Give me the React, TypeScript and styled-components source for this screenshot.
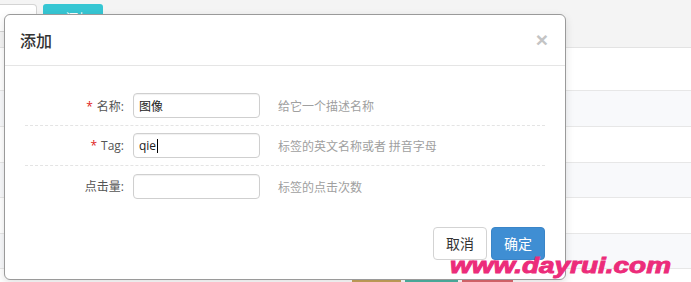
import React from "react";
import styled, { createGlobalStyle } from "styled-components";

const GlobalStyle = createGlobalStyle`
  html, body { margin: 0; padding: 0; background: #fff; }
  body { overflow: hidden; font-family: "Open Sans", "Noto Sans CJK SC", sans-serif; }
  * { box-sizing: border-box; }
`;

const Page = styled.div`
  position: relative;
  width: 691px;
  height: 282px;
  overflow: hidden;
  background: #fff;
`;

const TopBar = styled.div`
  height: 48px;
  background: #f4f4f4;
  border-bottom: 1px solid #e3e3e3;
  display: flex;
  align-items: flex-start;
  gap: 6px;
  padding-top: 4px;
`;

const SearchBox = styled.div`
  width: 37px;
  height: 28px;
  background: #fff;
  border: 1px solid #d4d4d4;
  border-left: none;
  border-radius: 0 4px 4px 0;
`;

const TealButton = styled.div`
  width: 60px;
  height: 28px;
  background: #36c6d3;
  border-radius: 3px;
  color: #fff;
  font-size: 13px;
  line-height: 28px;
  text-align: center;
`;

const Row = styled.div<{ $h: number; $striped?: boolean }>`
  height: ${(p) => p.$h}px;
  background: ${(p) => (p.$striped ? "#f8f9fb" : "#fff")};
  border-bottom: 1px solid #e7e7e7;
  display: flex;
  align-items: flex-start;
  gap: 4px;
  padding: 11px 0 0 352px;
`;

const Tag = styled.span<{ $color: string; $w: number }>`
  display: inline-block;
  width: ${(p) => p.$w}px;
  height: 20px;
  background: ${(p) => p.$color};
`;

const Modal = styled.div`
  position: absolute;
  left: 4px;
  top: 14px;
  width: 562px;
  background: #fff;
  border: 1px solid #9a9a9a;
  border-radius: 6px;
  box-shadow: 0 3px 9px rgba(0, 0, 0, 0.12);
`;

const Header = styled.div`
  height: 51px;
  padding: 15px 15px;
  border-bottom: 1px solid #e5e5e5;
  display: flex;
  align-items: center;
  justify-content: space-between;
`;

const Title = styled.h4`
  margin: 0;
  font-family: "Noto Sans CJK SC", sans-serif;
  font-size: 16px;
  font-weight: 500;
  line-height: 20px;
  color: #333;
`;

const Close = styled.span`
  font-family: "Liberation Sans", sans-serif;
  font-size: 21px;
  font-weight: 700;
  line-height: 20px;
  color: #c4c4c4;
  margin-right: 2px;
`;

const Body = styled.div`
  padding: 20px 20px 0;
`;

const FormRow = styled.div<{ $last?: boolean }>`
  display: grid;
  grid-template-columns: 99px 127px auto;
  column-gap: 9px;
  align-items: center;
  padding: 7px 0;
  height: 40px;
  border-bottom: ${(p) => (p.$last ? "none" : "1px dashed #e4e4e4")};
`;

const Label = styled.label`
  text-align: right;
  font-family: "Open Sans", "Noto Sans CJK SC", sans-serif;
  font-size: 12px;
  color: #555;
  white-space: nowrap;
`;

const Required = styled.span`
  color: #e02222;
  margin-right: 4px;
`;

const Field = styled.div`
  height: 25px;
  border: 1px solid #cfcfcf;
  border-radius: 4px;
  box-shadow: inset 0 1px 1px rgba(0, 0, 0, 0.06);
  padding: 0 5px;
  display: flex;
  align-items: center;
  font-family: "Open Sans", "Noto Sans CJK SC", sans-serif;
  font-size: 12px;
  color: #222;
`;

const Caret = styled.span`
  display: inline-block;
  width: 1px;
  height: 14px;
  background: #000;
  margin-left: 1px;
`;

const Help = styled.span`
  margin-left: 9px;
  font-family: "Noto Sans CJK SC", sans-serif;
  font-size: 12px;
  color: #a0a0a0;
  white-space: nowrap;
`;

const Footer = styled.div`
  display: flex;
  justify-content: flex-end;
  gap: 4px;
  padding: 21px 20px 19px;
`;

const Button = styled.button<{ $primary?: boolean }>`
  height: 33px;
  padding: 0 12px;
  border-radius: 4px;
  font-family: "Noto Sans CJK SC", sans-serif;
  font-size: 14px;
  line-height: 31px;
  border: 1px solid ${(p) => (p.$primary ? "#3a85c8" : "#d3d3d3")};
  background: ${(p) => (p.$primary ? "#3f8ed3" : "#fff")};
  color: ${(p) => (p.$primary ? "#fff" : "#333")};
`;

const Watermark = styled.div`
  position: absolute;
  left: 450px;
  top: 255px;
  font-family: "Liberation Sans", sans-serif;
  font-size: 22px;
  line-height: 21px;
  font-weight: 700;
  font-style: italic;
  color: #ec2c7a;
  -webkit-text-stroke: 0.9px #ec2c7a;
  transform: scaleX(1.27);
  transform-origin: left center;
  white-space: nowrap;
`;

const rows = [
  { h: 43, striped: false },
  { h: 36, striped: true },
  { h: 36, striped: false },
  { h: 35, striped: true },
  { h: 36, striped: false },
  { h: 35, striped: true },
];

const fields = [
  { label: "名称:", required: true, value: "图像", caret: false, help: "给它一个描述名称" },
  { label: "Tag:", required: true, value: "qie", caret: true, help: "标签的英文名称或者 拼音字母" },
  { label: "点击量:", required: false, value: "", caret: false, help: "标签的点击次数" },
];

export default function App() {
  return (
    <Page>
      <GlobalStyle />
      <TopBar>
        <SearchBox />
        <TealButton>+ 添加</TealButton>
      </TopBar>
      {rows.map((r, i) => (
        <Row key={i} $h={r.h} $striped={r.striped} />
      ))}
      <Row $h={40}>
        <Tag $color="#c9a55c" $w={49} />
        <Tag $color="#4fb5a5" $w={53} />
        <Tag $color="#e06a70" $w={51} />
      </Row>

      <Modal>
        <Header>
          <Title>添加</Title>
          <Close>×</Close>
        </Header>
        <Body>
          {fields.map((f, i) => (
            <FormRow key={f.label} $last={i === fields.length - 1}>
              <Label>
                {f.required && <Required>*</Required>}
                {f.label}
              </Label>
              <Field>
                {f.value}
                {f.caret && <Caret />}
              </Field>
              <Help>{f.help}</Help>
            </FormRow>
          ))}
        </Body>
        <Footer>
          <Button>取消</Button>
          <Button $primary>确定</Button>
        </Footer>
      </Modal>

      <Watermark>www.dayrui.com</Watermark>
    </Page>
  );
}
